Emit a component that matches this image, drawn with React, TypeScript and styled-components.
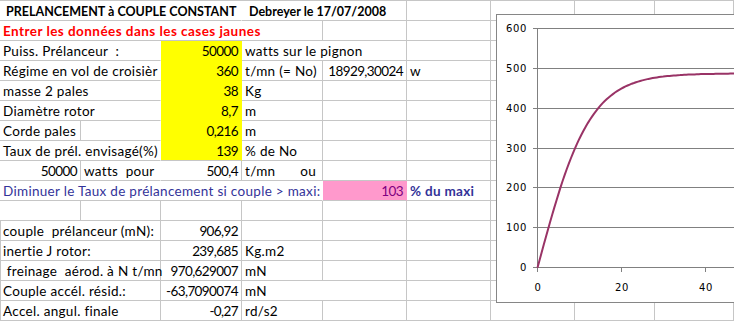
import React from 'react';
import styled, { createGlobalStyle } from 'styled-components';

const GlobalStyle = createGlobalStyle`
  html, body {
    margin: 0;
    padding: 0;
    background: #fff;
    overflow: hidden;
  }
`;

const grid = '#c6c6c6';

const Page = styled.div`
  position: relative;
  width: 734px;
  height: 323px;
  overflow: hidden;
  font-family: Lato, 'Liberation Sans', sans-serif;
  font-size: 13.5px;
  letter-spacing: 0.3px;
  color: #000;
`;

const Sheet = styled.div`
  display: grid;
  grid-template-columns: 81px 80px 81px 81px 84px 84px 84px 80px 79px;
  grid-auto-rows: 20px;
  border-top: 1px solid ${grid};
`;

interface CellProps {
  $span?: number;
  $right?: boolean;
  $bold?: boolean;
  $color?: string;
  $open?: boolean;
  $clip?: boolean;
  $edge?: boolean;
  $pl?: number;
}

const Cell = styled.div<CellProps>`
  grid-column: span ${p => p.$span || 1};
  box-sizing: border-box;
  height: 20px;
  padding: 2px 2px 0 ${p => (p.$pl !== undefined ? p.$pl : 3)}px;
  line-height: 17px;
  white-space: pre;
  overflow: ${p => (p.$clip ? 'hidden' : 'visible')};
  text-align: ${p => (p.$right ? 'right' : 'left')};
  color: ${p => p.$color || '#000'};
  font-weight: ${p => (p.$bold ? 700 : 400)};
  border-bottom: 1px solid ${grid};
  border-right: 1px solid ${p => (p.$open ? '#fff' : grid)};
  box-shadow: ${p => (p.$edge ? `inset 1px 0 0 ${grid}` : 'none')};
  position: relative;
  z-index: ${p => (p.$open ? 1 : 0)};
`;

// chiffres : plus serrés, comme dans la feuille d'origine
const Num = styled(Cell)`
  text-align: right;
  letter-spacing: -0.6px;
  padding-right: 3px;
`;

const Yellow = styled(Num)<{ $last?: boolean }>`
  background: #ffff00;
  border-right-color: #ffff00;
  border-bottom-color: ${p => (p.$last ? grid : '#ffff00')};
`;

const Pink = styled(Num)`
  background: #ff99cc;
  color: #800080;
  border-right-color: #ff99cc;
`;

const Title = styled(Cell)`
  font-size: 12.5px;
  letter-spacing: 0;
`;

const Warn = styled(Cell)`
  font-weight: 700;
  color: #ff0000;
  letter-spacing: 0.45px;
`;

const Split = styled(Cell)`
  display: flex;
  justify-content: space-between;
  padding-right: 6px;
`;

const Blank = ({ n }: { n: number }) => (
  <>
    {Array.from({ length: n }).map((_, i) => (
      <Cell key={i} />
    ))}
  </>
);

// graphe flottant par-dessus la feuille
const ChartBox = styled.div`
  position: absolute;
  left: 496px;
  top: 14px;
  width: 250px;
  height: 289px;
  box-sizing: border-box;
  border: 1px solid #868686;
  background: #fff;
  z-index: 2;
`;

const AxisText = styled.text`
  font-family: 'DejaVu Sans', Verdana, sans-serif;
  font-size: 10px;
  letter-spacing: 0.6px;
  fill: #000;
`;

const gridRows = [267, 227, 187, 148, 108, 68, 28];
const xTicks = [537, 621, 705];

const curve = () => {
  const pts: string[] = [];
  for (let t = 0; t <= 50; t += 0.5) {
    const v = 487 * Math.tanh(t / 12.5);
    const x = 537.5 + 4.19 * t;
    const y = 267.8 - 0.3992 * v;
    pts.push(`${x.toFixed(1)},${y.toFixed(1)}`);
  }
  return pts.join(' ');
};

const Chart: React.FC = () => (
  <ChartBox>
    <svg width="248" height="287" viewBox="497 15 248 287" style={{ display: 'block' }}>
      {gridRows.map((y, i) => (
        <g key={y}>
          <line x1={533} x2={745} y1={y + 0.5} y2={y + 0.5} stroke="#808080" strokeWidth={1} />
          <AxisText x={527} y={y + 4} textAnchor="end">
            {i * 100}
          </AxisText>
        </g>
      ))}
      <line x1={537.5} x2={537.5} y1={28} y2={268} stroke="#808080" strokeWidth={1} />
      {xTicks.map((x, i) => (
        <g key={x}>
          <line x1={x + 0.5} x2={x + 0.5} y1={267.5} y2={272} stroke="#808080" strokeWidth={1} />
          <AxisText x={x + 1} y={291} textAnchor="middle">
            {i * 20}
          </AxisText>
        </g>
      ))}
      <polyline points={curve()} fill="none" stroke="#993366" strokeWidth={2} />
    </svg>
  </ChartBox>
);

const App: React.FC = () => {
  return (
    <Page>
      <GlobalStyle />
      <Sheet>
        <Title $span={3} $bold $open $pl={6}>PRELANCEMENT à COUPLE CONSTANT</Title>
        <Title $span={2} $bold $pl={7}>Debreyer le 17/07/2008</Title>
        <Blank n={4} />

        <Warn $span={4}>Entrer les données dans les cases jaunes</Warn>
        <Blank n={5} />

        <Cell $span={2} $open>Puiss. Prélanceur  :</Cell>
        <Yellow>50000</Yellow>
        <Cell $span={2}>watts sur le pignon</Cell>
        <Blank n={4} />

        <Cell $span={2} $open $clip>Régime en vol de croisièr</Cell>
        <Yellow>360</Yellow>
        <Cell>t/mn (= No)</Cell>
        <Num>18929,30024</Num>
        <Cell>w</Cell>
        <Blank n={3} />

        <Cell $span={2} $open>masse 2 pales</Cell>
        <Yellow>38</Yellow>
        <Cell>Kg</Cell>
        <Blank n={5} />

        <Cell $span={2} $open>Diamètre rotor</Cell>
        <Yellow>8,7</Yellow>
        <Cell>m</Cell>
        <Blank n={5} />

        <Cell>Corde pales</Cell>
        <Cell $open />
        <Yellow>0,216</Yellow>
        <Cell>m</Cell>
        <Blank n={5} />

        <Cell $span={2} $open>Taux de prél. envisagé(%)</Cell>
        <Yellow $last>139</Yellow>
        <Cell>% de No</Cell>
        <Blank n={5} />

        <Num>50000</Num>
        <Cell $open>watts  pour</Cell>
        <Num>500,4</Num>
        <Split>
          <span>t/mn</span>
          <span>ou</span>
        </Split>
        <Blank n={5} />

        <Cell $span={4} $open $color="#333399">Diminuer le Taux de prélancement si couple &gt; maxi:</Cell>
        <Pink>103</Pink>
        <Cell $bold $color="#333399">% du maxi</Cell>
        <Blank n={3} />

        <Blank n={9} />

        <Cell $span={2} $edge>couple  prélanceur (mN):</Cell>
        <Num>906,92</Num>
        <Blank n={6} />

        <Cell $span={2} $edge>inertie J rotor:</Cell>
        <Num>239,685</Num>
        <Cell>Kg.m2</Cell>
        <Blank n={5} />

        <Cell $span={2} $edge> freinage  aérod. à N t/mn</Cell>
        <Num>970,629007</Num>
        <Cell>mN</Cell>
        <Blank n={5} />

        <Cell $span={2} $edge>Couple accél. résid.:</Cell>
        <Num>-63,7090074</Num>
        <Cell $span={2}>mN</Cell>
        <Blank n={4} />

        <Cell $span={2} $edge>Accel. angul. finale</Cell>
        <Num>-0,27</Num>
        <Cell>rd/s2</Cell>
        <Blank n={5} />
      </Sheet>
      <Chart />
    </Page>
  );
};

export default App;
